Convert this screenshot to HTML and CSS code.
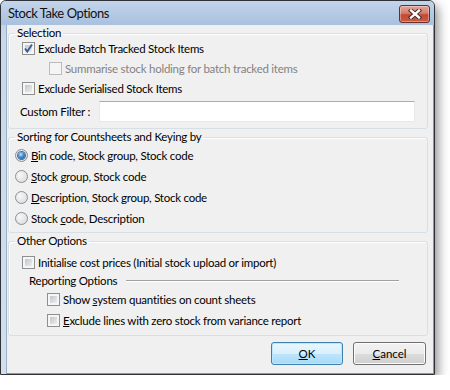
FILE: index.html
```
<!DOCTYPE html>
<html lang="en">
<head>
    <meta charset="UTF-8">
    <title>Stock Take Options</title>
    <link rel="stylesheet" href="styles.css">
</head>
<body>
    <div class="window">
        <div class="titlebar">
            <span class="title">Stock Take Options</span>
            <span class="close">
                <svg width="14" height="10" viewBox="0 0 14 10">
                    <path d="M3 1.5 L11 8.5 M11 1.5 L3 8.5" stroke="#3b2624" stroke-width="4.2" stroke-linecap="square"/>
                    <path d="M3 1.5 L11 8.5 M11 1.5 L3 8.5" stroke="#fff" stroke-width="2.4" stroke-linecap="square"/>
                </svg>
            </span>
        </div>
        <div class="client">
            <fieldset class="group group-selection">
                <legend>Selection</legend>
                <div class="row check-row">
                    <span class="cb checked">
                        <svg width="11" height="11" viewBox="0 0 11 11"><path d="M2 5.5 L4.3 8.5 L9 1.5" fill="none" stroke="#3c5a9a" stroke-width="1.9"/></svg>
                    </span>
                    <span>Exclude Batch Tracked Stock Items</span>
                </div>
                <div class="row check-row sub disabled">
                    <span class="cb"></span>
                    <span>Summarise stock holding for batch tracked items</span>
                </div>
                <div class="row check-row">
                    <span class="cb"></span>
                    <span>Exclude Serialised Stock Items</span>
                </div>
                <div class="row filter-row">
                    <label for="filter">Custom Filter :</label>
                    <input type="text" id="filter">
                </div>
            </fieldset>

            <fieldset class="group group-sorting">
                <legend>Sorting for Countsheets and Keying by</legend>
                <div class="row radio-row"><span class="rb on"></span><span><u>B</u>in code, Stock group, Stock code</span></div>
                <div class="row radio-row"><span class="rb"></span><span><u>S</u>tock group, Stock code</span></div>
                <div class="row radio-row"><span class="rb"></span><span><u>D</u>escription, Stock group, Stock code</span></div>
                <div class="row radio-row"><span class="rb"></span><span>Stock <u>c</u>ode, Description</span></div>
            </fieldset>

            <fieldset class="group group-other">
                <legend>Other Options</legend>
                <div class="row check-row first">
                    <span class="cb"></span>
                    <span>Initialise cost prices (Initial stock upload or import)</span>
                </div>
                <div class="row reporting">
                    <span>Reporting Options</span>
                    <span class="sep"></span>
                </div>
                <div class="row check-row nested">
                    <span class="cb"></span>
                    <span>Show <u>s</u>ystem quantities on count sheets</span>
                </div>
                <div class="row check-row nested">
                    <span class="cb"></span>
                    <span><u>E</u>xclude lines with zero stock from variance report</span>
                </div>
            </fieldset>

            <div class="buttons">
                <button class="btn default"><u>O</u>K</button>
                <button class="btn"><u>C</u>ancel</button>
            </div>
        </div>
    </div>
</body>
</html>
```

FILE: styles.css
```
body {
    margin: 0;
    background-color: #fff;
    font-family: Lato, "Open Sans", sans-serif;
    font-size: 11.5px;
    letter-spacing: -0.25px;
    color: #000;
}
.window {
    width: 435px;
    height: 375px;
    box-sizing: border-box;
    border: 1px solid #2f3338;
    border-radius: 6px 6px 0 0;
    background: linear-gradient(#bfd1e8, #c9d8ea 40px, #d3dfee);
    box-shadow: 3px 5px 11px rgba(0, 0, 0, 0.45);
    display: flex;
    flex-direction: column;
}
.titlebar {
    height: 24px;
    flex: none;
    display: flex;
    align-items: center;
    justify-content: space-between;
    padding: 0 4px 0 7px;
    border-radius: 5px 5px 0 0;
    background: linear-gradient(#c3d5ec, #b5cae4 50%, #a9c0de);
}
.title {
    font-size: 13px;
    letter-spacing: -0.45px;
    color: #111;
    margin-top: -1px;
}
.close {
    width: 31px;
    height: 18px;
    box-sizing: border-box;
    margin-top: 2px;
    border: 1px solid #6a2d27;
    border-radius: 3px;
    background: linear-gradient(#e3a496, #d47e6b 45%, #c44a32 55%, #c95a40);
    display: flex;
    align-items: center;
    justify-content: center;
    box-shadow: inset 0 0 0 1px rgba(255, 255, 255, 0.35);
}
.client {
    flex: 1;
    margin-left: 5px;
    border-left: 1px solid #9cb0c8;
    border-right: 1px solid #3bb4e8;
    border-bottom: 1px solid #3bb4e8;
    background-color: #f0f0f0;
    padding: 1px 5px 0 1px;
    display: flex;
    flex-direction: column;
}
.group {
    margin: 0;
    padding: 0 6px;
    border: 1px solid #d5dfe5;
    border-radius: 3px;
    box-shadow: inset 1px 1px 0 #fff;
    display: flex;
    flex-direction: column;
    min-width: 0;
}
.group legend {
    padding: 0 2px;
    line-height: 14px;
}
.group-sorting, .group-other {
    margin-top: 1px;
}
.row {
    display: flex;
    align-items: center;
}
.check-row {
    height: 20px;
    padding-left: 7px;
}
.check-row.sub {
    padding-left: 34px;
}
.check-row.nested {
    height: 21px;
    padding-left: 32px;
}
.group-selection .check-row:first-of-type {
    margin-top: -2px;
}
.check-row .cb {
    margin-right: 3px;
}
.cb {
    width: 13px;
    height: 13px;
    box-sizing: border-box;
    flex: none;
    border: 1px solid #8e8f8f;
    padding: 2px;
    background: linear-gradient(135deg, #c2c6cc, #eceef0) content-box, #f6f6f6;
    position: relative;
}
.cb svg {
    position: absolute;
    left: 0;
    top: 0;
}
.disabled {
    color: #838383;
}
.disabled .cb {
    border-color: #bcbcbc;
    background: #f4f4f4;
}
.filter-row {
    margin-top: 3px;
    padding-left: 5px;
    padding-bottom: 6px;
}
.filter-row label {
    width: 79px;
    flex: none;
}
.filter-row input {
    width: 316px;
    height: 21px;
    box-sizing: border-box;
    margin: 0;
    border: 1px solid #e3e9ef;
    border-top-color: #abadb3;
    background: #fff;
    font: inherit;
}
.radio-row {
    height: 21px;
}
.radio-row:first-of-type {
    margin-top: 1px;
}
.group-sorting {
    padding-bottom: 3px;
}
.rb {
    width: 13px;
    height: 13px;
    box-sizing: border-box;
    flex: none;
    margin-right: 3px;
    border: 1px solid #8e8f8f;
    border-radius: 50%;
    background: radial-gradient(circle at 35% 35%, #f8f8f8, #d4d7db);
    display: flex;
    align-items: center;
    justify-content: center;
}
.rb.on::after {
    content: "";
    width: 7px;
    height: 7px;
    border-radius: 50%;
    background: radial-gradient(circle at 40% 35%, #b9e6ff, #3f8bd6 45%, #123e7c);
    box-shadow: 0 0 0 1px #4c6e9a;
}
.group-other {
    padding-bottom: 4px;
}
.check-row.first {
    margin-top: 4px;
}
.reporting {
    height: 17px;
    padding-left: 14px;
}
.sep {
    flex: 1;
    margin: 0 22px 0 9px;
    border-top: 1px solid #a0a0a0;
    border-bottom: 1px solid #fff;
}
.buttons {
    display: flex;
    justify-content: flex-end;
    gap: 10px;
    margin-top: 6px;
    padding-right: 2px;
}
.btn {
    width: 73px;
    height: 23px;
    padding: 0;
    border: 1px solid #707070;
    border-radius: 3px;
    background: linear-gradient(#f2f2f2, #ebebeb 50%, #dddddd 50%, #cfcfcf);
    box-shadow: inset 0 0 0 1px #fcfcfc;
    font: inherit;
    color: #000;
}
.btn.default {
    width: 72px;
    border-color: #3c7fb1;
    background: linear-gradient(#eaf6fd, #d9f0fc 50%, #bee6fd 50%, #a7d9f5);
    box-shadow: inset 0 0 0 1px #bde7ff;
}
```
